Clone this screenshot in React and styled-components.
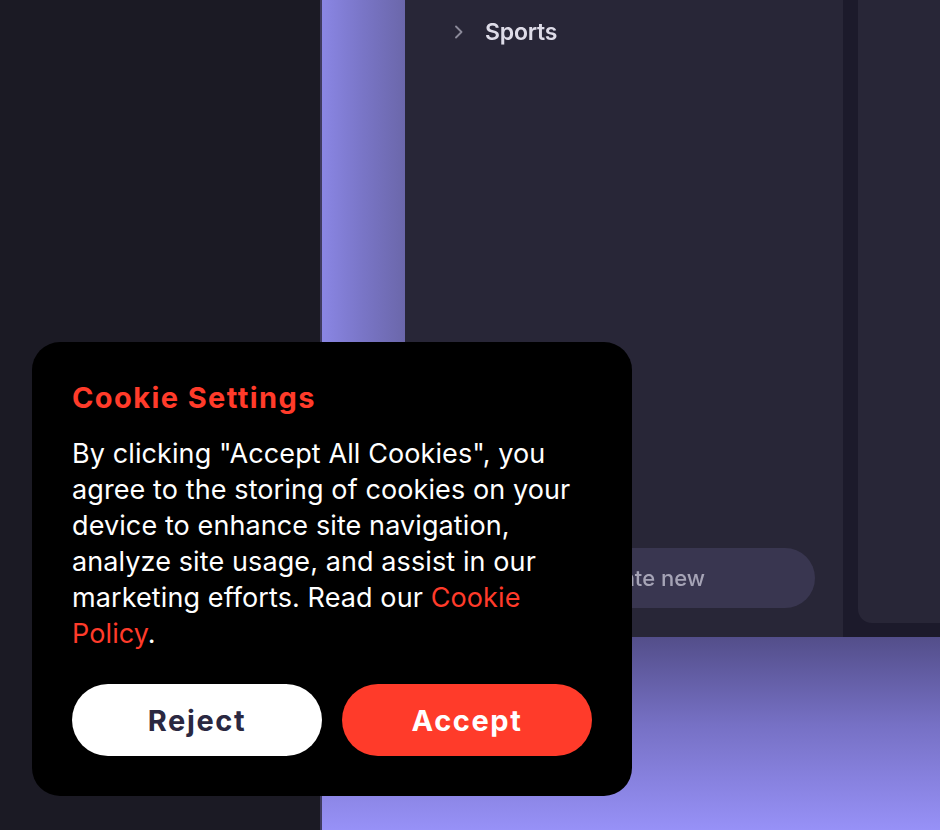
import React from 'react'
import styled, { createGlobalStyle } from 'styled-components'

const GlobalStyle = createGlobalStyle`
  * { box-sizing: border-box; }
  html, body { margin: 0; padding: 0; background: #1b1a24; }
  body { font-family: Inter, "Liberation Sans", sans-serif; }
`

const Page = styled.div`
  display: grid;
  grid-template-columns: 320px 1fr;
  width: 940px;
  height: 830px;
  overflow: hidden;
`

const LeftColumn = styled.div`
  background: #1b1a24;
`

const Workspace = styled.div`
  display: flex;
  flex-direction: column;
  border-left: 2px solid #3f3b60;
`

const TopArea = styled.div`
  display: flex;
  height: 637px;
`

const Strip = styled.div`
  width: 83px;
  background: linear-gradient(90deg, #8a86e4 0%, #7975c6 50%, #6b67aa 100%);
`

const MainPanel = styled.div`
  display: flex;
  flex-direction: column;
  width: 438px;
  background: #282637;
  padding: 19px 28px 29px 40px;
`

const NavItem = styled.div`
  display: flex;
  align-items: center;
  gap: 21px;
  padding-left: 9px;
  height: 26px;
  filter: blur(0.5px);
`

const NavLabel = styled.span`
  font-size: 23px;
  font-weight: 600;
  color: #dedce8;
  letter-spacing: -0.2px;
`

const CreatePill = styled.div`
  display: flex;
  align-items: center;
  justify-content: center;
  gap: 10px;
  margin-top: auto;
  height: 60px;
  border-radius: 30px;
  background: #393650;
  color: #a6a4b6;
  font-size: 22px;
  font-weight: 500;
  filter: blur(0.4px);
`

const Divider = styled.div`
  width: 15px;
  background: #1c1a2b;
`

const SideArea = styled.div`
  flex: 1;
  display: flex;
  background: #1c1a2b;
  padding-bottom: 14px;
`

const SideCard = styled.div`
  flex: 1;
  background: #282637;
  border-bottom-left-radius: 14px;
`

const BottomArea = styled.div`
  flex: 1;
  background: linear-gradient(180deg, #534e8a 0%, #7670c4 45%, #9791f7 100%);
`

const Dialog = styled.div`
  position: fixed;
  left: 32px;
  top: 342px;
  width: 600px;
  padding: 40px;
  background: #000;
  border-radius: 28px;
`

const Title = styled.h2`
  margin: 0;
  font-size: 29px;
  line-height: 32px;
  font-weight: 700;
  color: #ff3b2a;
  letter-spacing: 1.4px;
`

const Body = styled.p`
  margin: 22px 0 0;
  font-size: 27px;
  line-height: 36px;
  font-weight: 400;
  color: #fff;
  letter-spacing: 0.1px;
`

const Link = styled.a`
  color: #ff3b2a;
  text-decoration: none;
`

const Actions = styled.div`
  display: grid;
  grid-template-columns: 1fr 1fr;
  gap: 20px;
  margin-top: 32px;
`

const Button = styled.button`
  height: 72px;
  border: none;
  border-radius: 36px;
  font-family: Inter, "Liberation Sans", sans-serif;
  font-size: 29px;
  font-weight: 700;
  letter-spacing: 1.6px;
  background: ${p => (p.$primary ? '#ff3b2a' : '#fff')};
  color: ${p => (p.$primary ? '#fff' : '#2a2841')};
  cursor: pointer;
`

const Chevron = () => (
  <svg width="10" height="14" viewBox="0 0 10 14" fill="none">
    <path d="M2 1.5 L7.5 7 L2 12.5" stroke="#8c8a9a" strokeWidth="1.8" strokeLinecap="round" strokeLinejoin="round" />
  </svg>
)

const Plus = () => (
  <svg width="20" height="20" viewBox="0 0 20 20" fill="none">
    <path d="M10 3 V17 M3 10 H17" stroke="#a6a4b6" strokeWidth="2" strokeLinecap="round" />
  </svg>
)

export default function App() {
  return (
    <>
      <GlobalStyle />
      <Page>
        <LeftColumn />
        <Workspace>
          <TopArea>
            <Strip />
            <MainPanel>
              <NavItem>
                <Chevron />
                <NavLabel>Sports</NavLabel>
              </NavItem>
              <CreatePill>
                <Plus />
                Create new
              </CreatePill>
            </MainPanel>
            <Divider />
            <SideArea>
              <SideCard />
            </SideArea>
          </TopArea>
          <BottomArea />
        </Workspace>
      </Page>
      <Dialog>
        <Title>Cookie Settings</Title>
        <Body>
          By clicking "Accept All Cookies", you agree to the storing of cookies on your device
          to enhance site navigation, analyze site usage, and assist in our marketing efforts.
          Read our <Link href="#">Cookie Policy</Link>.
        </Body>
        <Actions>
          <Button>Reject</Button>
          <Button $primary>Accept</Button>
        </Actions>
      </Dialog>
    </>
  )
}
